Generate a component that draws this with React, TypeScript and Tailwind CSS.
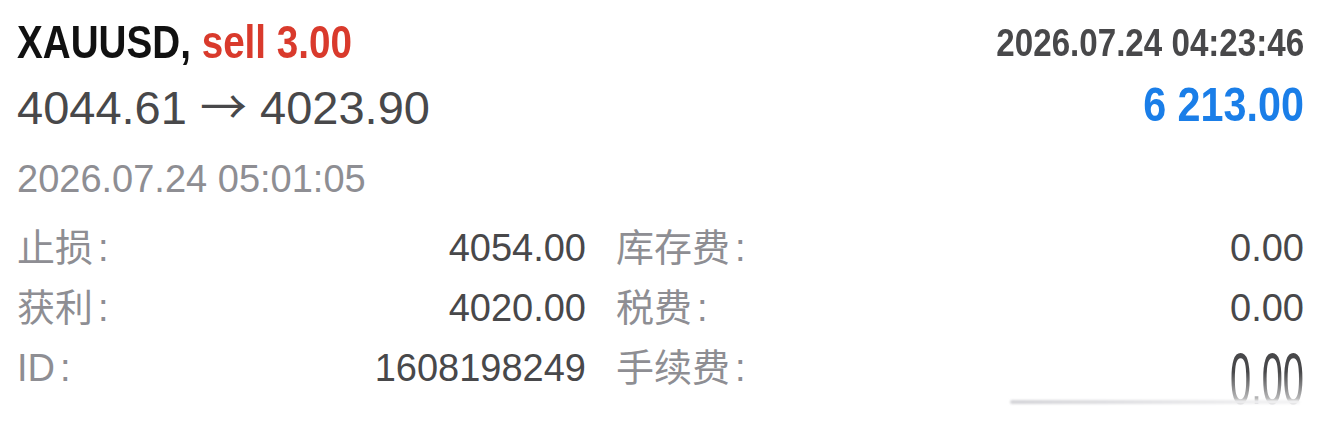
import React from "react";

const sans = "font-['Liberation_Sans','Noto_Sans_CJK_SC',sans-serif]";

type Item = { label: string; value: string };

const left: Item[] = [
  { label: "止损", value: "4054.00" },
  { label: "获利", value: "4020.00" },
  { label: "ID", value: "1608198249" },
];

const right: Item[] = [
  { label: "库存费", value: "0.00" },
  { label: "税费", value: "0.00" },
  { label: "手续费", value: "0.00" },
];

function Cell({ item, last }: { item: Item; last?: boolean }) {
  return (
    <div className="flex h-[60px] items-center justify-between">
      <span className="text-[38px] leading-none text-[#8e8e93]">
        {item.label}
        <span className="ml-[5px]">:</span>
      </span>
      {last ? (
        // bottom value with the smeared tail
        <span className="block h-[38px] self-start pt-[5px]">
          <span className="block origin-top scale-y-[1.9] text-[38px] leading-none text-[#48484a] [mask-image:linear-gradient(to_bottom,black_40%,transparent_100%)]">
            {item.value}
          </span>
        </span>
      ) : (
        <span className="text-[38px] leading-none text-[#48484a]">{item.value}</span>
      )}
    </div>
  );
}

export default function App() {
  return (
    <div className={`${sans} h-[426px] w-[1320px] overflow-hidden bg-white pl-[17px] pr-[16px] pt-[14px]`}>
      {/* symbol + open time */}
      <div className="flex h-[56px] items-center justify-between">
        <div className="inline-block origin-left scale-x-[0.84] text-[46px] font-bold leading-none">
          <span className="text-[#111]">XAUUSD,</span>{" "}
          <span className="text-[#d93a2c]">sell 3.00</span>
        </div>
        <div className="inline-block origin-right scale-x-[0.85] text-[39px] font-bold leading-none text-[#48484a]">
          2026.07.24 04:23:46
        </div>
      </div>

      {/* price move + profit */}
      <div className="flex h-[70px] items-center justify-between">
        <div className="text-[47px] leading-none text-[#48484a]">
          4044.61 <span className="font-['Noto_Sans_CJK_SC']">→</span> 4023.90
        </div>
        <div className="inline-block origin-right scale-x-[0.86] text-[48px] font-bold leading-none text-[#1a7ee8]">
          6 213.00
        </div>
      </div>

      {/* close time */}
      <div className="flex h-[78px] items-center text-[38px] leading-none text-[#8e8e93]">
        2026.07.24 05:01:05
      </div>

      {/* details grid */}
      <div className="grid grid-cols-[569px_1fr] gap-x-[30px]">
        <div>
          {left.map((it) => (
            <Cell key={it.label} item={it} />
          ))}
        </div>
        <div>
          {right.map((it, i) => (
            <Cell key={it.label} item={it} last={i === right.length - 1} />
          ))}
        </div>
      </div>

      <div className="ml-auto mr-[4px] mt-[2px] h-[4px] w-[290px] rounded-full bg-gradient-to-r from-[#d4d4d8] to-[#f4f4f5] blur-[1px]" />
    </div>
  );
}
